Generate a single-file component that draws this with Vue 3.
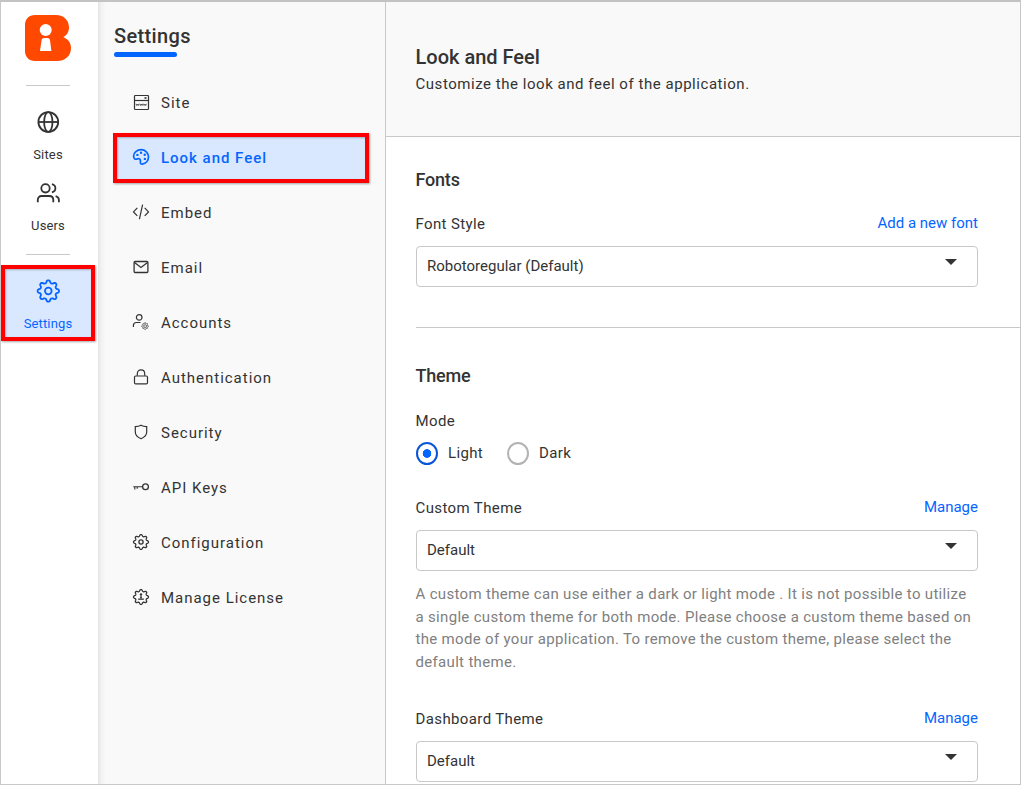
<script setup>
// Rounded eight-lobed cog outline around (c, c)
function cog(c, radius, depth) {
  const points = []
  for (let i = 0; i < 128; i++) {
    const a = (i / 128) * Math.PI * 2
    const r = radius + depth * Math.tanh(1.3 * Math.cos(8 * a))
    points.push(`${(c + r * Math.sin(a)).toFixed(2)} ${(c - r * Math.cos(a)).toFixed(2)}`)
  }
  return `M${points.join('L')}Z`
}

const menu = [
  { id: 'site', label: 'Site' },
  { id: 'look', label: 'Look and Feel', active: true },
  { id: 'embed', label: 'Embed' },
  { id: 'email', label: 'Email' },
  { id: 'accounts', label: 'Accounts' },
  { id: 'auth', label: 'Authentication' },
  { id: 'security', label: 'Security' },
  { id: 'keys', label: 'API Keys' },
  { id: 'config', label: 'Configuration' },
  { id: 'license', label: 'Manage License' },
]
const railCog = cog(12, 9.4, 1.5)
const menuCog = cog(8.5, 6.6, 1)
const smallCog = cog(12.6, 2.9, 0.6)
</script>

<template>
  <div class="app">
    <nav class="rail">
      <svg class="logo" width="46" height="46" viewBox="0 0 46 46">
        <path fill="#ff4800" d="M10 0H31C39 0 44 5.5 44 12.5C44 16.8 41.8 20.3 38.3 22C43 24.2 46 27.8 46 33C46 40.5 40.5 46 32.5 46H10C4 46 0 42 0 36V10C0 4 4 0 10 0Z" />
        <circle cx="20.7" cy="15" r="6" fill="#fff" />
        <path fill="#fff" d="M16.600 25Q17 23 19 23H22.600Q24.600 23 25 25L26.400 36H15Z" />
      </svg>
      <div class="rule first"></div>
      <a class="rail-item sites">
        <svg width="24" height="24" viewBox="-0.3 0 24 24" class="line">
          <circle cx="12" cy="12" r="9.900" /><ellipse cx="12" cy="12" rx="4.200" ry="9.900" /><path d="M2 12H22" />
        </svg>
        <span>Sites</span>
      </a>
      <a class="rail-item users">
        <svg width="24" height="24" viewBox="-0.3 -0.3 24 24" class="line">
          <circle cx="9.200" cy="7" r="4.200" /><path d="M1.500 21V18.500C1.500 16.300 3 14.700 5.300 14.700H13C15.300 14.700 17 16.300 17 18.500V21M15.600 2.900C17.800 3.400 19.100 5.100 19.100 7S17.800 10.600 15.600 11.100M19.300 14.900C21.400 15.400 22.600 16.700 22.600 18.700V21" />
        </svg>
        <span>Users</span>
      </a>
      <div class="rule second"></div>
      <a class="rail-item current">
        <svg width="24" height="24" viewBox="-0.3 0 24 24" class="line">
          <path :d="railCog" /><circle cx="12" cy="12" r="3.300" />
        </svg>
        <span>Settings</span>
      </a>
    </nav>

    <aside class="side">
      <h2>Settings</h2>
      <div class="mark"></div>
      <ul>
        <li v-for="m in menu" :key="m.id" :class="{ active: m.active }">
          <svg width="17" height="17" viewBox="0.5 0.5 17 17" class="thin">
            <template v-if="m.id === 'site'">
              <rect x="2" y="2" width="14" height="14" rx="0.800" /><path d="M2 7H16" /><path d="M12 4.500H14" stroke-width="1.600" />
              <path stroke-width="0.800" d="M3.500 10.300L4.200 12L5 10.600L5.800 12L6.500 10.300M7.200 10.300L7.900 12L8.700 10.600L9.500 12L10.200 10.300M10.900 10.300L11.600 12L12.400 10.600L13.200 12L13.900 10.300" />
            </template>
            <template v-else-if="m.id === 'look'">
              <path stroke-width="1.700" d="M5.300 10.200C6.700 9.700 7.900 10.500 7.900 12V13.800C7.900 15 8.500 15.900 9.700 15.700C13.500 15.200 16 12.200 16 8.600C16 4.400 12.700 1.200 8.600 1.200C4.500 1.200 1.100 4.200 1.100 7.600C1.100 10.500 2.900 11.400 5.300 10.200Z" />
              <g class="dots"><circle cx="4.900" cy="6.400" r="1.200" /><circle cx="8.500" cy="4.300" r="1.200" /><circle cx="12.200" cy="6.300" r="1.200" /><circle cx="12.400" cy="10.400" r="1.200" /></g>
            </template>
            <path v-else-if="m.id === 'embed'" d="M4.800 4.400L1 8.400L4.800 12.400M12.200 4.400L16 8.400L12.200 12.400M10.100 1.200L6.900 15.700" />
            <template v-else-if="m.id === 'email'">
              <rect x="1.600" y="3" width="13.800" height="11" rx="1" stroke-width="1.300" /><path d="M2 4L8.500 9L15 4" stroke-width="1.300" />
            </template>
            <template v-else-if="m.id === 'accounts'">
              <circle cx="6.700" cy="3.900" r="2.800" /><path d="M0.900 13.500V12C0.900 10.200 2.200 9 4 9H8" /><path :d="smallCog" stroke-width="0.900" stroke-dasharray="1.500 0.600" /><circle cx="12.600" cy="12.600" r="1.400" stroke-width="0.700" />
            </template>
            <template v-else-if="m.id === 'auth'">
              <rect x="2" y="7.500" width="13" height="7.900" rx="1.200" /><path d="M4.800 7.200V5.200C4.800 2.900 6.400 1.400 8.500 1.400S12.200 2.900 12.200 5.200V7.200" />
            </template>
            <path v-else-if="m.id === 'security'" d="M2.800 3.200C5.200 3.100 7 2.600 8.500 1.700C10 2.600 11.800 3.100 14.200 3.200V8.500C14.200 11.700 11.700 13.900 8.500 15.200C5.300 13.900 2.800 11.700 2.800 8.500Z" />
            <template v-else-if="m.id === 'keys'">
              <circle cx="13" cy="8.300" r="2.900" stroke-width="1.300" /><path d="M10 8.300H0.800M2.300 8.300V10.900M4.700 8.300V10.300" stroke-width="1.100" />
            </template>
            <template v-else>
              <path :d="menuCog" stroke-width="1.300" />
              <circle v-if="m.id === 'config'" cx="8.500" cy="8.500" r="2.100" stroke-width="1.300" />
              <g v-else class="dots"><circle cx="8.500" cy="5.900" r="1.200" /><path d="M8 7H9V10H8Z" /><circle cx="8.500" cy="8.800" r="0.900" /><path d="M5.700 10H11.300V11.300H5.700Z" /></g>
            </template>
          </svg>
          <span>{{ m.label }}</span>
        </li>
      </ul>
    </aside>

    <main>
      <header>
        <h1>Look and Feel</h1>
        <p>Customize the look and feel of the application.</p>
      </header>
      <section class="fonts">
        <h3>Fonts</h3>
        <div class="field-head"><label>Font Style</label><a>Add a new font</a></div>
        <div class="select"><span>Robotoregular (Default)</span><i></i></div>
      </section>
      <section class="theme">
        <h3>Theme</h3>
        <div class="mode">Mode</div>
        <div class="radios">
          <span class="radio on"></span><span class="light">Light</span>
          <span class="radio"></span><span class="dark">Dark</span>
        </div>
        <div class="field-head"><label>Custom Theme</label><a>Manage</a></div>
        <div class="select"><span>Default</span><i></i></div>
        <p class="hint">A custom theme can use either a dark or light mode . It is not possible to utilize<br>a single custom theme for both mode. Please choose a custom theme based on<br>the mode of your application. To remove the custom theme, please select the<br>default theme.</p>
        <div class="field-head"><label>Dashboard Theme</label><a>Manage</a></div>
        <div class="select"><span>Default</span><i></i></div>
      </section>
    </main>
  </div>
</template>

<style>
body { margin: 0; overflow: hidden; }
</style>

<style scoped>
* { box-sizing: border-box; margin: 0; padding: 0; }
.app {
  display: flex;
  width: 1021px;
  height: 785px;
  overflow: hidden;
  border: 1px solid #c8c8c8;
  border-top: 2px solid #c3c3c3;
  background: #fff;
  color: #333;
  font-family: Roboto, "Liberation Sans", sans-serif;
  font-size: 15px;
}
svg { display: block; flex: none; fill: none; overflow: visible; }
.line { stroke: currentColor; stroke-width: 1.8; }
.thin { stroke: currentColor; stroke-width: 1.2; }
.dots { fill: currentColor; stroke: none; }

.rail { width: 97px; flex: none; background: #fff; }
.logo { margin: 13px 0 0 24px; }
.rule { width: 44px; height: 1px; margin-left: 25px; background: #c8c8c8; }
.rule.first { margin-top: 24px; }
.rail-item {
  display: flex;
  flex-direction: column;
  align-items: center;
  width: 94px;
  font-size: 13px;
  line-height: 16px;
  letter-spacing: 0.15px;
}
.rail-item span { margin-top: 13px; }
.sites { margin-top: 24px; }
.users { margin-top: 18px; }
.rule.second { margin-top: 20px; }
.current {
  height: 76px;
  margin-top: 10px;
  padding-top: 10px;
  border: 4px solid #f00;
  background: #d9e8ff;
  color: #0565ff;
  box-shadow: 1px 1px 2px rgba(0, 0, 0, 0.35), inset 1px 1px 2px rgba(0, 0, 0, 0.25);
}

.side {
  width: 288px;
  flex: none;
  padding: 22px 0 0 15px;
  border-right: 1px solid #c8c8c8;
  background: linear-gradient(90deg, #e4e4e4, #f1f1f1 3px, #f9f9f9 8px);
}
h2 { margin-left: 1px; font-size: 20px; line-height: 24px; font-weight: 500; letter-spacing: 0.35px; }
.mark { width: 63px; height: 5px; margin-top: 4px; margin-left: 1px; border-radius: 3px; background: #0565ff; }
ul { margin-top: 21px; list-style: none; }
li {
  display: flex;
  align-items: center;
  width: 256px;
  height: 50px;
  margin-bottom: 5px;
  padding-left: 19.5px;
  letter-spacing: 0.98px;
}
li svg { margin-top: -1px; }
li span { margin-left: 11.5px; line-height: 20px; }
li.active {
  padding-left: 15.5px;
  border: 4px solid #f00;
  background: #d9e8ff;
  color: #0565ff;
  font-weight: 500;
  box-shadow: 1px 1px 2px rgba(0, 0, 0, 0.35), inset 1px 1px 2px rgba(0, 0, 0, 0.25);
}

main { flex: 1; min-width: 0; }
header {
  height: 135px;
  padding: 43px 0 0 29.5px;
  border-bottom: 1px solid #c8c8c8;
  background: #f9f9f9;
}
h1 { font-size: 20px; line-height: 24px; font-weight: 500; }
header p { margin-top: 5px; line-height: 20px; letter-spacing: 0.54px; }
section { margin-left: 30px; padding-right: 42px; }
h3, label, .mode, .hint { margin-left: -0.5px; }
h3 { font-size: 18px; line-height: 22px; font-weight: 500; letter-spacing: -0.2px; }
.fonts { height: 191px; padding-top: 32px; border-bottom: 1px solid #c8c8c8; }
.field-head { display: flex; justify-content: space-between; line-height: 20px; letter-spacing: 0.38px; }
.field-head a { margin-top: -1px; color: #0565ff; letter-spacing: 0; }
.fonts .field-head { margin-top: 23px; }
.select {
  display: flex;
  justify-content: space-between;
  height: 41px;
  margin-top: 12px;
  padding: 9px 20px 0 10px;
  border: 1px solid #c8c8c8;
  border-radius: 4px;
  line-height: 20px;
}
.select i {
  width: 0;
  height: 0;
  margin-top: 3px;
  border: 6px solid transparent;
  border-top-color: #333;
}
.theme { padding-top: 37px; }
.mode { margin-top: 24px; line-height: 20px; letter-spacing: 0.4px; }
.radios { display: flex; align-items: center; height: 23px; margin-top: 11px; letter-spacing: 0.35px; }
.radio { width: 22px; height: 23px; border: 2px solid #b3b3b3; border-radius: 50%; }
.radio.on { border-color: #0a55d5; background: radial-gradient(circle, #0565ff 4px, #fff 4.600px); }
.light { margin: -2px 24px 0 10px; }
.dark { margin: -2px 0 0 10px; }
.radios + .field-head { margin-top: 33px; }
.hint { margin-top: 12px; color: #808080; line-height: 22.7px; letter-spacing: 0.32px; white-space: nowrap; }
.hint + .field-head { margin-top: 35px; }
</style>
